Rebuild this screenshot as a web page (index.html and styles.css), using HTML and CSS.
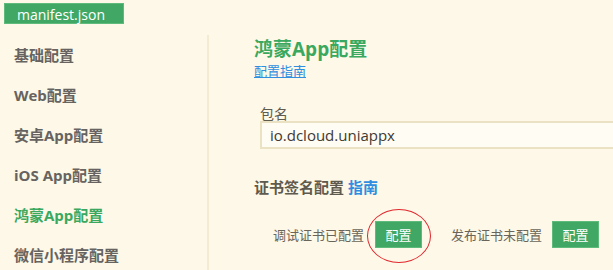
FILE: index.html
```html
<!DOCTYPE html>
<html lang="zh-CN">
<head>
    <meta charset="UTF-8">
    <meta name="viewport" content="width=device-width, initial-scale=1.0">
    <title>manifest.json</title>
    <link rel="stylesheet" href="styles.css">
</head>
<body>

    <!-- File tab -->
    <div class="file-tab">manifest.json</div>

    <div class="layout">
        <!-- Left menu -->
        <ul class="side-menu">
            <li>基础配置</li>
            <li>Web配置</li>
            <li>安卓App配置</li>
            <li>iOS App配置</li>
            <li class="active">鸿蒙App配置</li>
            <li>微信小程序配置</li>
        </ul>

        <!-- Settings panel -->
        <div class="panel">
            <h2 class="panel-title">鸿蒙App配置</h2>
            <a class="guide-link" href="#">配置指南</a>

            <div class="form-group">
                <label for="bundleName">包名</label>
                <input type="text" id="bundleName" value="io.dcloud.uniappx">
            </div>

            <h3 class="section-title">证书签名配置 <a href="#">指南</a></h3>

            <div class="cert-row">
                <span class="cert-state">调试证书已配置</span>
                <span class="btn-wrap">
                    <button class="btn">配置</button>
                    <span class="mark-circle"></span>
                </span>
                <span class="cert-state cert-release">发布证书未配置</span>
                <button class="btn">配置</button>
            </div>
        </div>
    </div>

</body>
</html>
```

FILE: styles.css
```css
* {
  margin: 0;
  padding: 0;
  box-sizing: border-box;
}

body {
  background-color: #fdf8e7;
  font-family: "Open Sans", "Noto Sans CJK SC", sans-serif;
  color: #5f5a4e;
  overflow: hidden;
}

.file-tab {
  margin: 3px 0 0 4px;
  width: 120px;
  height: 21px;
  line-height: 21px;
  padding-left: 12px;
  background-color: #40a864;
  border: 1px solid #5fbb7c;
  color: #fff;
  font-size: 14px;
}

.layout {
  display: flex;
  margin-top: 11px;
  height: 235px;
  overflow: hidden;
}

.side-menu {
  list-style: none;
  width: 207px;
  flex-shrink: 0;
}

.side-menu li {
  height: 40px;
  line-height: 40px;
  padding-left: 14px;
  font-size: 15px;
  font-weight: bold;
  color: #666360;
}

.side-menu li:last-child {
  height: 35px;
}

.side-menu li.active {
  color: #3aa85e;
}

.panel {
  flex: 1;
  border-left: 2px solid #f4ecd2;
  padding: 2px 0 0 45px;
}

.panel-title {
  font-size: 19px;
  line-height: 24px;
  font-weight: bold;
  color: #3aa85e;
}

.guide-link {
  display: block;
  width: max-content;
  margin-top: 2px;
  font-size: 13px;
  line-height: 16px;
  color: #2f8ee0;
}

.form-group {
  margin: 27px 0 0 6px;
}

label {
  display: block;
  font-size: 14px;
  line-height: 15px;
  color: #5f5a4e;
}

/* the field runs on past the window edge, so no right border shows */
input {
  display: block;
  width: 100%;
  height: 28px;
  padding: 0 8px;
  font-family: "Open Sans", sans-serif;
  font-size: 15px;
  color: #3d3a33;
  background-color: #fffcf3;
  border: 2px solid #ebe2c4;
  border-right: none;
  outline: none;
}

.section-title {
  margin-top: 27px;
  font-size: 15px;
  line-height: 22px;
  font-weight: bold;
  color: #5f5a4e;
}

.section-title a {
  color: #2f8ee0;
  text-decoration: none;
}

.cert-row {
  display: flex;
  align-items: center;
  margin-top: 23px;
  padding-left: 19px;
}

.cert-state {
  font-size: 13px;
  color: #6a655a;
  margin-right: 11px;
}

.cert-release {
  margin-left: 29px;
  margin-right: 10px;
}

.btn-wrap {
  position: relative;
  display: flex;
}

.btn {
  width: 47px;
  height: 27px;
  background-color: #40a864;
  border: 1px solid #5fbb7c;
  color: #fff;
  font-family: "Noto Sans CJK SC", sans-serif;
  font-size: 13px;
  cursor: pointer;
}

/* red hand-drawn mark round the first button */
.mark-circle {
  position: absolute;
  left: -8px;
  top: -12px;
  width: 64px;
  height: 54px;
  border: 1.5px solid #e0262d;
  border-radius: 50%;
  pointer-events: none;
}
```
